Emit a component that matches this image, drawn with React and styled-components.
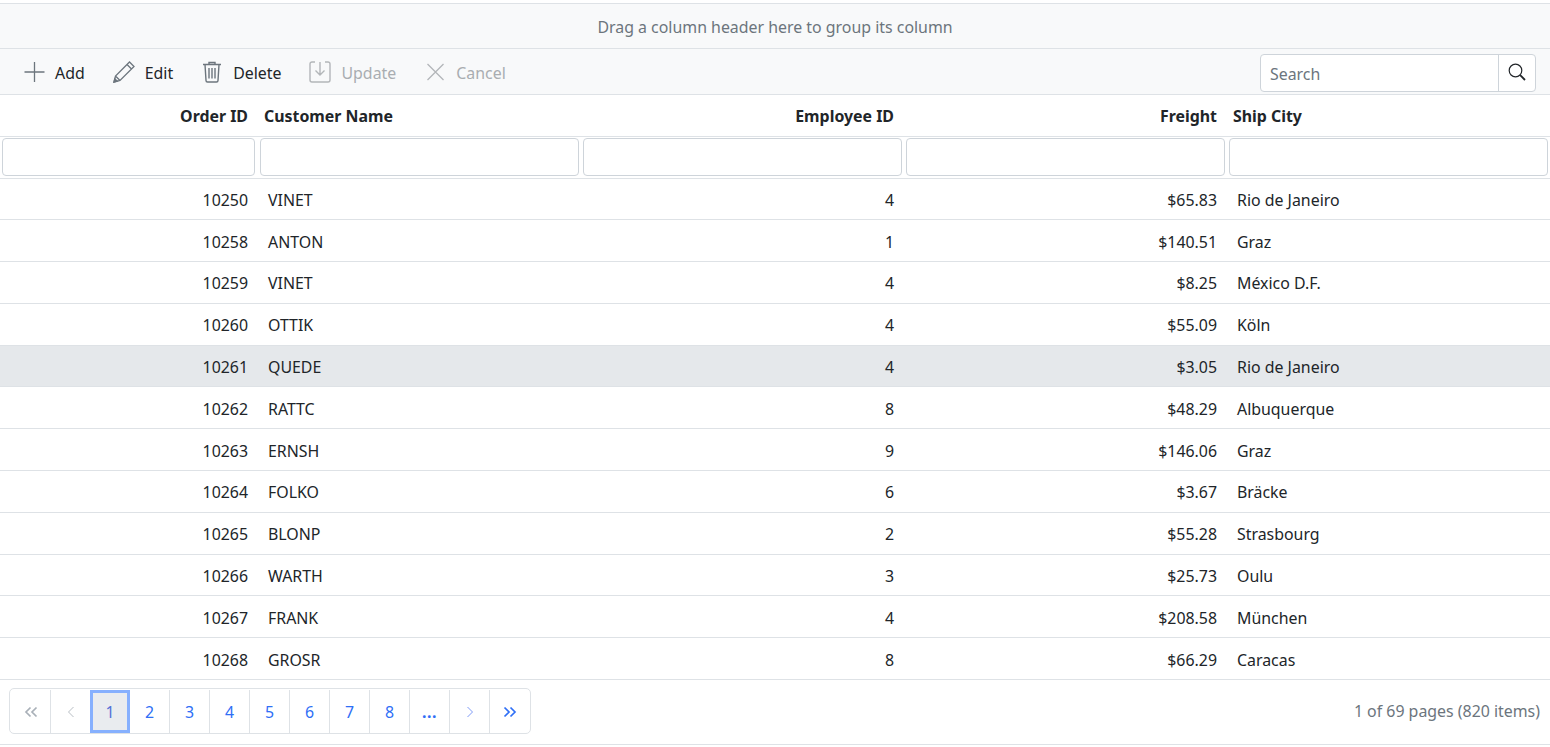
import React from "react";
import styled, { createGlobalStyle } from "styled-components";

const GlobalStyle = createGlobalStyle`
  html, body {
    margin: 0;
    padding: 0;
    background: #fff;
    overflow: hidden;
  }
  * {
    box-sizing: border-box;
  }
`;

const COLUMNS = "258px 323px 323px 323px 323px";

const Page = styled.div`
  width: 1550px;
  height: 747px;
  padding-top: 3px;
  font-family: "Noto Sans", "Open Sans", sans-serif;
  font-size: 15.9px;
  color: #212529;
`;

const GroupArea = styled.div`
  height: 46px;
  display: flex;
  align-items: center;
  justify-content: center;
  padding-top: 2px;
  background: #f8f9fa;
  border-top: 1px solid #dee2e6;
  border-bottom: 1px solid #dee2e6;
  color: #6c757d;
`;

const Toolbar = styled.div`
  height: 46px;
  display: flex;
  align-items: center;
  justify-content: space-between;
  padding: 3px 14px 0 23px;
  background: #f8f9fa;
  border-bottom: 1px solid #dee2e6;
`;

const ToolGroup = styled.div`
  display: flex;
  align-items: center;
  gap: 28px;
  margin-top: -3px;
`;

const ToolButton = styled.div`
  display: flex;
  align-items: center;
  gap: 10px;
  color: ${(p) => (p.$disabled ? "#a9adb1" : "#212529")};
  svg {
    display: block;
    stroke: ${(p) => (p.$disabled ? "#b3b6b9" : "#6c757d")};
    fill: none;
  }
`;

const ToolLabel = styled.span`
  padding-top: 3px;
`;

const SearchBox = styled.div`
  width: 276px;
  height: 38px;
  display: flex;
  background: #fff;
  border: 1px solid #ced4da;
  border-radius: 4px;
`;

const SearchText = styled.div`
  flex: 1;
  display: flex;
  align-items: center;
  padding: 2px 0 0 9px;
  color: #6c757d;
`;

const SearchButton = styled.div`
  width: 37px;
  display: flex;
  align-items: center;
  justify-content: center;
  border-left: 1px solid #ced4da;
  padding-bottom: 3px;
`;

const HeaderRow = styled.div`
  display: grid;
  grid-template-columns: ${COLUMNS};
  height: 42px;
  border-bottom: 1px solid #dee2e6;
  font-weight: 700;
`;

const HeaderCell = styled.div`
  display: flex;
  align-items: center;
  justify-content: ${(p) => (p.$right ? "flex-end" : "flex-start")};
  padding: 0 10px 0 6px;
`;

const FilterRow = styled.div`
  display: grid;
  grid-template-columns: ${COLUMNS};
  height: 42px;
  margin-bottom: -0.55px;
  border-bottom: 1px solid #dee2e6;
`;

const FilterCell = styled.div`
  padding: 1px 2px;
  &:first-child {
    padding-right: 3px;
  }
`;

const FilterInput = styled.div`
  height: 38px;
  background: #fff;
  border: 1px solid #ced4da;
  border-radius: 4px;
`;

const DataRow = styled.div`
  display: grid;
  grid-template-columns: ${COLUMNS};
  height: 41.8px;
  background: ${(p) => (p.$selected ? "#e5e8eb" : "transparent")};
  border-bottom: 1px solid #dee2e6;
`;

const DataCell = styled.div`
  display: flex;
  align-items: center;
  justify-content: ${(p) => (p.$right ? "flex-end" : "flex-start")};
  padding: 2px 10px 0;
`;

const Pager = styled.div`
  height: 65px;
  display: flex;
  align-items: center;
  justify-content: space-between;
  padding: 0 10px 2px 9px;
  border-bottom: 1px solid #dee2e6;
`;

const PageLinks = styled.div`
  display: flex;
  height: 46px;
  padding: 1px 0 0 1px;
  border: 1px solid #dee2e6;
  border-radius: 5px;
`;

const PageLink = styled.div`
  width: 40px;
  display: flex;
  align-items: center;
  justify-content: center;
  color: ${(p) => p.$color || "#2f6ff6"};
  border-right: 1px solid #dee2e6;
  &:last-child {
    border-right: none;
  }
  svg {
    display: block;
    fill: none;
    stroke: currentColor;
  }
`;

const ActivePageLink = styled.div`
  width: 40px;
  margin-left: -1px;
  display: flex;
  align-items: center;
  justify-content: center;
  color: #5470d8;
  background: #e9ecef;
  border: 3px solid #86b0fe;
`;

const Dots = styled.span`
  font-weight: 700;
  letter-spacing: 0.5px;
`;

const PageInfo = styled.div`
  color: #6c757d;
`;

const ROWS = [
  ["10250", "VINET", "4", "$65.83", "Rio de Janeiro"],
  ["10258", "ANTON", "1", "$140.51", "Graz"],
  ["10259", "VINET", "4", "$8.25", "México D.F."],
  ["10260", "OTTIK", "4", "$55.09", "Köln"],
  ["10261", "QUEDE", "4", "$3.05", "Rio de Janeiro"],
  ["10262", "RATTC", "8", "$48.29", "Albuquerque"],
  ["10263", "ERNSH", "9", "$146.06", "Graz"],
  ["10264", "FOLKO", "6", "$3.67", "Bräcke"],
  ["10265", "BLONP", "2", "$55.28", "Strasbourg"],
  ["10266", "WARTH", "3", "$25.73", "Oulu"],
  ["10267", "FRANK", "4", "$208.58", "München"],
  ["10268", "GROSR", "8", "$66.29", "Caracas"],
];

const HEADERS = [
  ["Order ID", true],
  ["Customer Name", false],
  ["Employee ID", true],
  ["Freight", true],
  ["Ship City", false],
];

// pager arrows, double ones are drawn heavier like in the grid theme
const Chevrons = ({ dir, double }) => {
  const flip = dir === "left" ? "translate(14 0) scale(-1 1)" : undefined;
  return (
    <svg width="14" height="12" viewBox="0 0 14 12" strokeWidth={double ? 1.7 : 1}>
      <g transform={flip}>
        {double ? (
          <>
            <path d="M1.500 1.500 6 6l-4.500 4.500" />
            <path d="M7.500 1.500 12 6l-4.500 4.500" />
          </>
        ) : (
          <path d="M4.500 1 9.500 6l-5 5" />
        )}
      </g>
    </svg>
  );
};

const App = () => {
  return (
    <Page>
      <GlobalStyle />
      <GroupArea>Drag a column header here to group its column</GroupArea>

      <Toolbar>
        <ToolGroup>
          <ToolButton>
            <svg width="22" height="22" viewBox="0 0 22 22" strokeWidth="1.300">
              <path d="M11.500 1v20M1.500 11h20" />
            </svg>
            <ToolLabel>Add</ToolLabel>
          </ToolButton>
          <ToolButton>
            <svg width="22" height="22" viewBox="0 0 22 22" strokeWidth="1.300">
              <path d="M1 21l1.500-6L16.500 1 21 5.500 7 19.500zM2.500 15 7 19.500M14 3.500 18.500 8" />
              <path d="M1 21l.8-3.200 2.400 2.400z" fill="#6c757d" />
            </svg>
            <ToolLabel>Edit</ToolLabel>
          </ToolButton>
          <ToolButton>
            <svg width="22" height="22" viewBox="0 0 22 22" strokeWidth="1.400">
              <path d="M2 3.500h18M8 3.500V1.500h6v2M4 3.500l1 16a1.500 1.500 0 0 0 1.500 1.500h9a1.500 1.500 0 0 0 1.500-1.500l1-16M8 7v10.500M11 7v10.500M14 7v10.500" />
            </svg>
            <ToolLabel>Delete</ToolLabel>
          </ToolButton>
          <ToolButton $disabled>
            <svg width="22" height="22" viewBox="0 0 22 22" strokeWidth="1.400">
              <path d="M6 1H3a2 2 0 0 0-2 2v16a2 2 0 0 0 2 2h16a2 2 0 0 0 2-2V3a2 2 0 0 0-2-2h-3M11 1v13M6.500 9.500 11 14l4.500-4.500" />
            </svg>
            <ToolLabel>Update</ToolLabel>
          </ToolButton>
          <ToolButton $disabled>
            <svg width="22" height="22" viewBox="0 0 22 22" strokeWidth="1.300">
              <path d="M3.500 3 19.500 19M19.500 3 3.500 19" />
            </svg>
            <ToolLabel>Cancel</ToolLabel>
          </ToolButton>
        </ToolGroup>
        <SearchBox>
          <SearchText>Search</SearchText>
          <SearchButton>
            <svg width="18" height="18" viewBox="0 0 18 18" fill="none" stroke="#212529">
              <circle cx="7.500" cy="7.500" r="6.300" strokeWidth="1.200" />
              <path d="M12.200 12.200 17 17" strokeWidth="1.800" />
            </svg>
          </SearchButton>
        </SearchBox>
      </Toolbar>

      <HeaderRow>
        {HEADERS.map(([label, right]) => (
          <HeaderCell key={label} $right={right}>
            {label}
          </HeaderCell>
        ))}
      </HeaderRow>

      <FilterRow>
        {HEADERS.map(([label]) => (
          <FilterCell key={label}>
            <FilterInput />
          </FilterCell>
        ))}
      </FilterRow>

      {ROWS.map((row) => (
        <DataRow key={row[0]} $selected={row[0] === "10261"}>
          <DataCell $right>{row[0]}</DataCell>
          <DataCell>{row[1]}</DataCell>
          <DataCell $right>{row[2]}</DataCell>
          <DataCell $right>{row[3]}</DataCell>
          <DataCell>{row[4]}</DataCell>
        </DataRow>
      ))}

      <Pager>
        <PageLinks>
          <PageLink $color="#a9b0b8"><Chevrons dir="left" double /></PageLink>
          <PageLink $color="#b8bec4"><Chevrons dir="left" /></PageLink>
          <ActivePageLink>1</ActivePageLink>
          {["2", "3", "4", "5", "6", "7", "8"].map((n) => (
            <PageLink key={n}>{n}</PageLink>
          ))}
          <PageLink><Dots>...</Dots></PageLink>
          <PageLink $color="#7f9bf7"><Chevrons dir="right" /></PageLink>
          <PageLink><Chevrons dir="right" double /></PageLink>
        </PageLinks>
        <PageInfo>1 of 69 pages (820 items)</PageInfo>
      </Pager>
    </Page>
  );
};

export default App;
